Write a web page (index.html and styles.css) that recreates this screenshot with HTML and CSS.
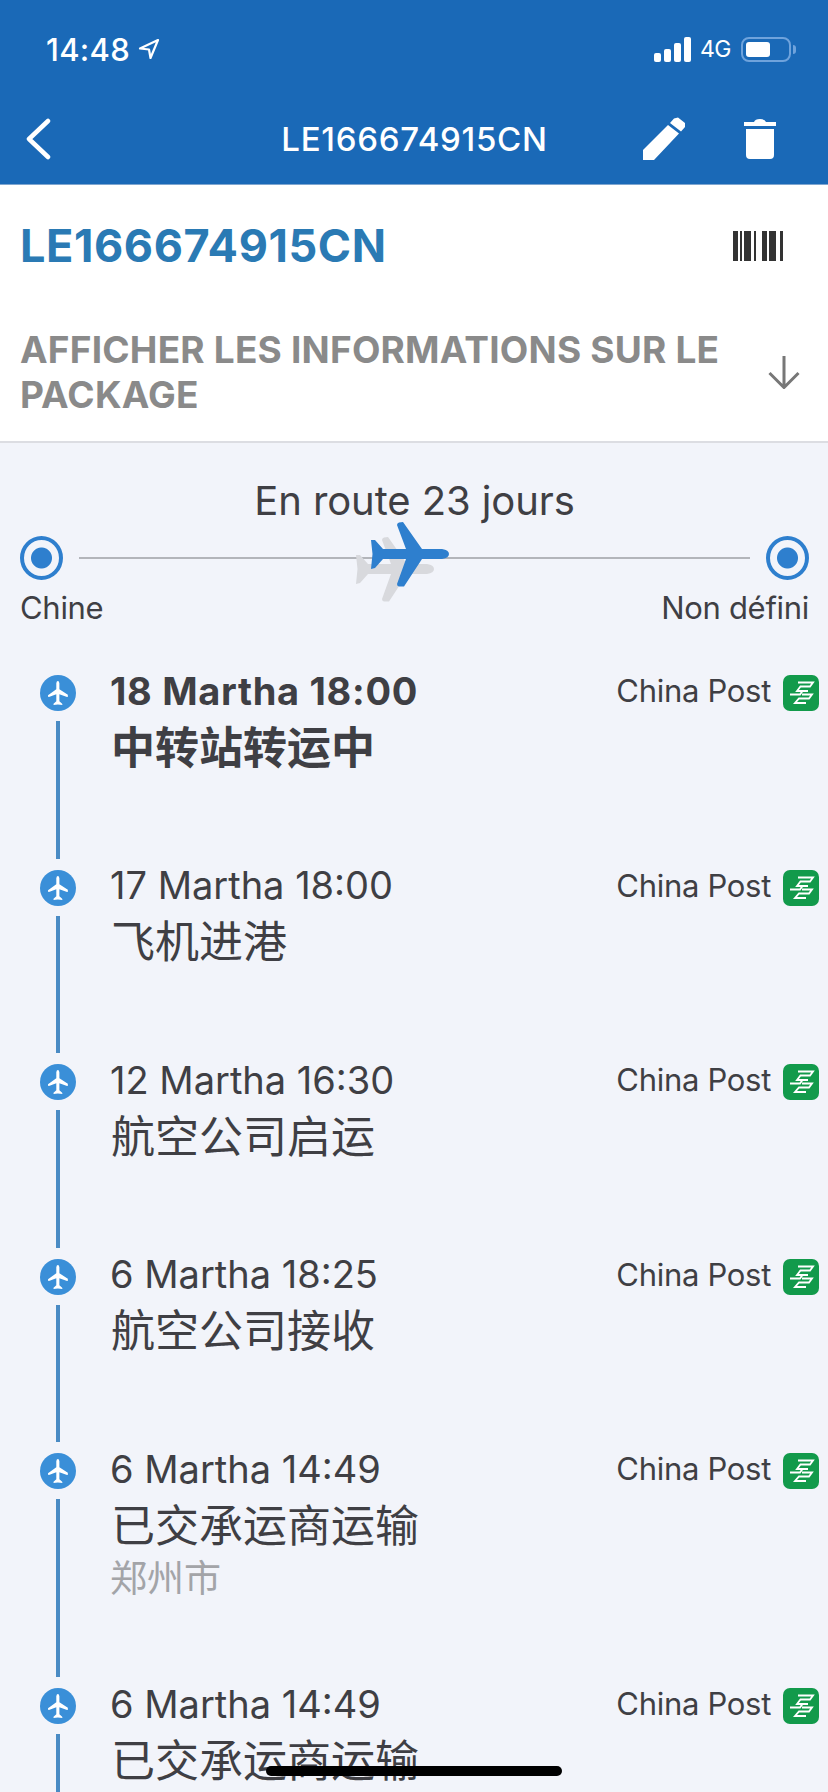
FILE: index.html
```html
<!DOCTYPE html>
<html>
<head>
	<meta charset="utf-8">
	<title>LE166674915CN</title>
	<link rel="stylesheet" href="styles.css">
</head>
<body>
	<svg class="defs" width="0" height="0">
		<symbol id="plane" viewBox="0 0 78 65">
			<path d="M26 3Q26 1 28 .5L32 0 51 27H71Q78 28 78 32T71 37H51L33 64.500 28 64.500Q26 64 26 62L35 37H12L4 46 0 47 1.500 32 0 18 4 18 12 27H35Z"/>
		</symbol>
		<symbol id="post" viewBox="0 0 36 36">
			<rect width="36" height="36" rx="7" fill="#129a4b"/>
			<path d="M15 7.500H30L27 11.500H17.500L14 16H25M7 19.500H17L19.500 16M19 19.500H29L26 23.500H16L12 28H23" fill="none" stroke="#fff" stroke-width="1.800"/>
		</symbol>
	</svg>

	<div id="page">
		<header class="top">
			<div class="status">
				<div class="clock">14:48
					<svg class="locate" width="22" height="22" viewBox="0 0 22 22"><path d="M20 2 2 10.500 11 11.500 12.500 20Z" fill="none" stroke="#fff" stroke-width="2.200" stroke-linejoin="round"/></svg>
				</div>
				<div class="signal">
					<span class="bar b1"></span><span class="bar b2"></span><span class="bar b3"></span><span class="bar b4"></span>
				</div>
				<div class="net">4G</div>
				<div class="battery"><span class="level"></span></div>
				<div class="cap"></div>
			</div>
			<nav class="nav">
				<svg class="back" width="26" height="42" viewBox="0 0 26 42"><path d="M23 3 4 21 23 39" fill="none" stroke="#fff" stroke-width="4.500" stroke-linecap="round" stroke-linejoin="round"/></svg>
				<div class="nav-title">LE166674915CN</div>
				<svg class="pen" width="44" height="44" viewBox="0 0 44 44"><path d="M32 1.500 36 .5 43 6 43 10 39 14.500 28 6ZM26 8 37 16.500 12 43H1V33Z" fill="#fff"/></svg>
				<svg class="bin" width="34" height="42" viewBox="0 0 34 42"><path d="M1 4H11Q12 1 17 1T23 4H33V8H1ZM3 11H31V37Q31 41 27 41H7Q3 41 3 37Z" fill="#fff"/></svg>
			</nav>
		</header>

		<section class="panel">
			<div class="code-row">
				<div class="code">LE166674915CN</div>
				<svg class="barcode" width="50" height="30" viewBox="0 0 50 30" fill="#333">
					<rect x="0" width="5" height="30"/><rect x="7" width="2" height="30"/><rect x="11" width="7" height="30"/><rect x="21" width="2" height="30"/><rect x="29" width="5" height="30"/><rect x="36" width="7" height="30"/><rect x="47" width="3" height="30"/>
				</svg>
			</div>
			<div class="info-row">
				<div class="info">AFFICHER LES INFORMATIONS SUR LE PACKAGE</div>
				<svg class="down" width="32" height="33" viewBox="0 0 32 33"><path d="M16 0V31M1.500 17 16 31.500 30.500 17" fill="none" stroke="#777" stroke-width="3"/></svg>
			</div>
		</section>

		<section class="route">
			<div class="route-title">En route 23 jours</div>
			<div class="track">
				<span class="node"></span>
				<span class="rail"></span>
				<span class="node"></span>
				<svg class="plane shadow"><use href="#plane"/></svg>
				<svg class="plane"><use href="#plane"/></svg>
			</div>
			<div class="ends">
				<span>Chine</span>
				<span>Non défini</span>
			</div>
		</section>

		<ul class="events">
			<li class="event latest">
				<div class="mark"><span class="dot"><svg width="24" height="24"><use href="#plane"/></svg></span><span class="stem"></span></div>
				<div class="body">
					<div class="head"><span class="when">18 Martha 18:00</span><span class="carrier">China Post</span><svg class="logo"><use href="#post"/></svg></div>
					<div class="what">中转站转运中</div>
				</div>
			</li>
			<li class="event">
				<div class="mark"><span class="dot"><svg width="24" height="24"><use href="#plane"/></svg></span><span class="stem"></span></div>
				<div class="body">
					<div class="head"><span class="when">17 Martha 18:00</span><span class="carrier">China Post</span><svg class="logo"><use href="#post"/></svg></div>
					<div class="what">飞机进港</div>
				</div>
			</li>
			<li class="event">
				<div class="mark"><span class="dot"><svg width="24" height="24"><use href="#plane"/></svg></span><span class="stem"></span></div>
				<div class="body">
					<div class="head"><span class="when">12 Martha 16:30</span><span class="carrier">China Post</span><svg class="logo"><use href="#post"/></svg></div>
					<div class="what">航空公司启运</div>
				</div>
			</li>
			<li class="event">
				<div class="mark"><span class="dot"><svg width="24" height="24"><use href="#plane"/></svg></span><span class="stem"></span></div>
				<div class="body">
					<div class="head"><span class="when">6 Martha 18:25</span><span class="carrier">China Post</span><svg class="logo"><use href="#post"/></svg></div>
					<div class="what">航空公司接收</div>
				</div>
			</li>
			<li class="event">
				<div class="mark"><span class="dot"><svg width="24" height="24"><use href="#plane"/></svg></span><span class="stem"></span></div>
				<div class="body">
					<div class="head"><span class="when">6 Martha 14:49</span><span class="carrier">China Post</span><svg class="logo"><use href="#post"/></svg></div>
					<div class="what">已交承运商运输</div>
					<div class="where">郑州市</div>
				</div>
			</li>
			<li class="event">
				<div class="mark"><span class="dot"><svg width="24" height="24"><use href="#plane"/></svg></span><span class="stem"></span></div>
				<div class="body">
					<div class="head"><span class="when">6 Martha 14:49</span><span class="carrier">China Post</span><svg class="logo"><use href="#post"/></svg></div>
					<div class="what">已交承运商运输</div>
				</div>
			</li>
		</ul>

		<div class="home"></div>
	</div>
</body>
</html>
```

FILE: styles.css
```css
*
{
	margin: 0;
	padding: 0;
	box-sizing: border-box;
}
html, body
{
	height: 100%;
	overflow: hidden;
}
body
{
	background: #f2f4fa;
	font-family: Inter, "Noto Sans CJK SC", sans-serif;
	color: #3f3f44;
}
.defs
{
	position: absolute;
}
#page
{
	position: relative;
	width: 828px;
	height: 1792px;
	overflow: hidden;
}

/* blue header */
.top
{
	height: 185px;
	background: #1a69b7;
	border-bottom: 1px solid #7fa6d0;
	color: #fff;
}
.status
{
	display: flex;
	align-items: center;
	height: 36px;
	padding: 31px 0 0 46px;
	box-sizing: content-box;
}
.clock
{
	display: flex;
	align-items: center;
	gap: 8px;
	flex: 1;
	font-size: 31px;
	font-weight: 500;
	letter-spacing: .3px;
}
.signal
{
	display: flex;
	align-items: flex-end;
	gap: 3px;
	height: 25px;
}
.bar
{
	width: 7px;
	background: #fff;
	border-radius: 2px;
}
.b1 { height: 9px; }
.b2 { height: 13px; }
.b3 { height: 19px; }
.b4 { height: 25px; }
.net
{
	margin-left: 9px;
	font-size: 23px;
	letter-spacing: -.5px;
}
.battery
{
	width: 50px;
	height: 25px;
	margin-left: 10px;
	padding: 3px;
	border: 2px solid #6fa3dc;
	border-radius: 8px;
}
.level
{
	display: block;
	width: 24px;
	height: 15px;
	background: #fff;
	border-radius: 3px;
}
.cap
{
	width: 3px;
	height: 9px;
	margin: 0 32px 0 2px;
	background: #6fa3dc;
	border-radius: 0 3px 3px 0;
}
.nav
{
	display: flex;
	align-items: center;
	height: 60px;
	margin-top: 42px;
	padding: 0 51px 0 25px;
}
.nav-title
{
	flex: 1;
	padding-left: 136px;
	text-align: center;
	font-size: 33px;
	font-weight: 500;
	letter-spacing: .7px;
}
.pen
{
	margin-right: 57px;
}

/* white panel */
.panel
{
	height: 258px;
	background: #fff;
	border-bottom: 2px solid #dcdde2;
	padding: 0 28px 0 20px;
}
.code-row
{
	display: flex;
	justify-content: space-between;
	align-items: center;
	height: 88px;
	padding-top: 33px;
	padding-right: 17px;
}
.code
{
	font-size: 45px;
	font-weight: 700;
	letter-spacing: .6px;
	color: #2a7ab4;
}
.info-row
{
	display: flex;
	justify-content: space-between;
	align-items: center;
	margin-top: 54px;
}
.info
{
	width: 720px;
	font-size: 37px;
	line-height: 45px;
	font-weight: 700;
	letter-spacing: .2px;
	color: #8a8a8a;
}

/* route */
.route
{
	padding: 32px 19px 0 20px;
}
.route-title
{
	text-align: center;
	font-size: 40px;
	line-height: 52px;
	letter-spacing: -.1px;
}
.track
{
	position: relative;
	display: flex;
	align-items: center;
	margin-top: 9px;
}
.node
{
	width: 43px;
	height: 44px;
	border: 4px solid #2e7fce;
	border-radius: 50%;
	background: radial-gradient(circle, #2e7fce 10px, transparent 11px);
}
.rail
{
	flex: 1;
	height: 2px;
	margin: 0 16px;
	background: #b3b5ba;
}
.plane
{
	position: absolute;
	left: 351px;
	top: -14px;
	width: 78px;
	height: 65px;
	fill: #2e7fce;
}
.shadow
{
	left: 336px;
	top: 1px;
	fill: #d8d9dd;
}
.ends
{
	display: flex;
	justify-content: space-between;
	margin-top: 8px;
	font-size: 31px;
	line-height: 40px;
	letter-spacing: -.3px;
}

/* timeline */
.events
{
	list-style: none;
	margin-top: 47px;
	padding: 0 9px 0 40px;
}
.event
{
	display: flex;
}
.mark
{
	display: flex;
	flex-direction: column;
	align-items: center;
	width: 36px;
	margin-right: 34px;
}
.dot
{
	display: flex;
	align-items: center;
	justify-content: center;
	flex: none;
	width: 36px;
	height: 36px;
	border-radius: 50%;
	background: #3a8fd8;
}
.dot svg
{
	fill: #fff;
	transform: rotate(-90deg);
}
.stem
{
	flex: 1;
	width: 4px;
	margin: 10px 0 11px;
	background: #4a8bc4;
}
.body
{
	flex: 1;
	padding-bottom: 94px;
}
.head
{
	display: flex;
	align-items: center;
	height: 36px;
}
.when
{
	flex: 1;
	margin-bottom: 5px;
	font-size: 38px;
}
.latest .when
{
	font-weight: 700;
	letter-spacing: .7px;
}
.latest .what
{
	font-weight: 700;
}
.carrier
{
	margin-bottom: 5px;
	font-size: 31px;
	letter-spacing: -.3px;
}
.logo
{
	width: 36px;
	height: 36px;
	margin-left: 12px;
}
.what
{
	margin: 8.500px 0 0 1px;
	font-size: 44px;
	line-height: 56px;
	height: 56px;
}
.where
{
	margin-top: 4.500px;
	height: 36px;
	font-size: 37px;
	line-height: 41px;
	color: #a3a4a8;
}

/* home bar over the list */
.home
{
	position: absolute;
	left: 266px;
	top: 1766px;
	width: 296px;
	height: 10px;
	background: #000;
	border-radius: 5px;
}
```
